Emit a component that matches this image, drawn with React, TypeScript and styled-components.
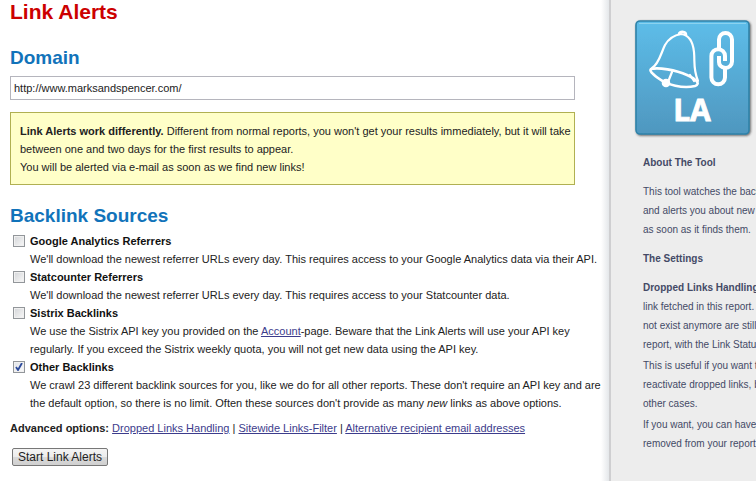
import React, { useState } from "react";
import styled, { createGlobalStyle } from "styled-components";

const GlobalStyle = createGlobalStyle`
  *, *::before, *::after { box-sizing: border-box; }
  body {
    margin: 0;
    background: #fff;
    color: #222;
    font: 11px/18px "Liberation Sans", Arial, sans-serif;
  }
  h1, h2, h3, p { margin: 0; }
`;

const Page = styled.div`
  display: grid;
  grid-template-columns: minmax(0, 1fr) 147px;
  min-height: 100vh;
  overflow: hidden;
`;

const Main = styled.main`
  padding: 0 4px 12px 10px;
  background: linear-gradient(to left, #e4e7ea, #fff 8px);
`;

const Title = styled.h1`
  color: #c00;
  font-size: 21px;
  line-height: 24px;
`;

const SectionTitle = styled.h2`
  color: #1173ba;
  font-size: 19px;
  line-height: 22px;
`;

const DomainSection = styled.section`
  margin: 23px 30px 0 0;
`;

const DomainInput = styled.input`
  display: block;
  width: 100%;
  height: 24px;
  margin-top: 7px;
  padding: 0 3px;
  border: 1px solid #b5b5bd;
  border-radius: 0;
  background: #fff;
  color: #222;
  font: 11px "Liberation Sans", Arial, sans-serif;
`;

const Notice = styled.div`
  margin: 12px 30px 0 0;
  padding: 9px 1px 8px 9px;
  border: 1px solid #b0b052;
  background: #ffffc8;
`;

const Sources = styled.section`
  margin-top: 20px;
`;

const SourceList = styled.div`
  margin-top: 5px;
`;

const Source = styled.div`
  display: grid;
  grid-template-columns: 20px minmax(0, 1fr);
`;

const SourceLabel = styled.label`
  color: #111;
  font-weight: bold;
`;

const SourceText = styled.p`
  grid-column: 2;
`;

const Tick = styled.input`
  appearance: none;
  width: 12px;
  height: 12px;
  margin: 3px 0 0 3px;
  border: 1px solid #92969a;
  background: linear-gradient(135deg, #d3d5d8, #f8f8f8);
  box-shadow: inset 0 0 0 1px #f0f0f0;

  &:checked {
    background:
      url("data:image/svg+xml,%3Csvg xmlns='http://www.w3.org/2000/svg' viewBox='0 0 10 10'%3E%3Cpath d='M2 5l2 3 4-7' fill='none' stroke='%232d4b9b' stroke-width='1.8'/%3E%3C/svg%3E") center / 10px,
      linear-gradient(135deg, #dfe2e8, #fafafa);
  }
`;

const Link = styled.a`
  color: #3c3c8c;
  text-decoration: underline;
`;

const Advanced = styled.p`
  margin-top: 7px;
`;

const StartButton = styled.button`
  display: block;
  margin: 11px 0 0 2px;
  height: 18px;
  padding: 0 5px;
  border: 1px solid #777;
  border-radius: 2px;
  background: linear-gradient(#f4f4f4, #ececec 50%, #dadada 50%, #d0d0d0);
  color: #222;
  font: 12px/16px "Liberation Sans", Arial, sans-serif;
`;

const Sidebar = styled.aside`
  display: flex;
  flex-direction: column;
  align-items: flex-start;
  gap: 10px;
  overflow: hidden;
  padding: 17px 0 0 32px;
  border-left: 2px solid #cfcfd1;
  background: #ededed;
  color: #444a66;
  font-size: 10px;
  line-height: 19px;
  white-space: nowrap;
`;

const ToolLogo = styled.svg`
  display: block;
  flex: none;
  width: 122px;
  height: 124px;
  margin: 0 0 2px -10px;
`;

const SideHeading = styled.h3`
  font-size: 10px;
  line-height: 19px;
`;

const SideGroup = styled.div`
  display: flex;
  flex-direction: column;
  gap: 2px;
`;

const sources = [
  {
    id: "analytics",
    name: "Google Analytics Referrers",
    text: "We'll download the newest referrer URLs every day. This requires access to your Google Analytics data via their API.",
  },
  {
    id: "statcounter",
    name: "Statcounter Referrers",
    text: "We'll download the newest referrer URLs every day. This requires access to your Statcounter data.",
  },
  {
    id: "sistrix",
    name: "Sistrix Backlinks",
    text: (
      <>
        We use the Sistrix API key you provided on the <Link href="#account">Account</Link>-page. Beware that the Link
        Alerts will use your API key
        <br />
        regularly. If you exceed the Sistrix weekly quota, you will not get new data using the API key.
      </>
    ),
  },
  {
    id: "other",
    name: "Other Backlinks",
    text: (
      <>
        We crawl 23 different backlink sources for you, like we do for all other reports. These don't require an API key
        and are
        <br />
        the default option, so there is no limit. Often these sources don't provide as many <em>new</em> links as above
        options.
      </>
    ),
  },
];

function Logo() {
  return (
    <ToolLogo viewBox="0 0 122 124" role="img" aria-label="Link Alerts">
      <defs>
        <linearGradient id="tile" x1="0" y1="0" x2="0" y2="1">
          <stop offset="0" stopColor="#5dbde9" />
          <stop offset="1" stopColor="#4f97bf" />
        </linearGradient>
        <filter id="shade" x="-10%" y="-10%" width="120%" height="120%">
          <feDropShadow dx="1" dy="1" stdDeviation="1" floodColor="#333" floodOpacity="0.75" />
        </filter>
      </defs>
      <rect x="3" y="4" width="113" height="113" rx="4" fill="url(#tile)" stroke="#2f83a9" strokeWidth="1.6" filter="url(#shade)" />
      <path d="M6 6.500H113" stroke="#8bd2ef" strokeWidth="1" />
      <g fill="none" stroke="#fff" strokeLinecap="round" strokeLinejoin="round">
        <path d="M19 51C26 47 28 36 32 28C36 21 42 18 48 17C56 18 60 25 61 35C62 46 60 52 65 64" strokeWidth="2.200" />
        <path d="M46 17C46 14 53 14 53 18" strokeWidth="2.600" />
        <path d="M18 52C25 50 43 53 54 58C63 62 68 67 62 69C50 72 34 68 25 61C20 57 16 54 18 52Z" strokeWidth="2.600" />
        <path d="M39 55L35 65M57 58L61 64" strokeWidth="2.200" />
      </g>
      <circle cx="33" cy="66" r="4.300" fill="#fff" />
      <g fill="none" stroke="#fff" strokeWidth="4">
        <path d="M86 32V22.500A6.500 6.500 0 0 1 99 22.500V44.500A6.500 6.500 0 0 1 92.500 51Q86 50 86 45V39" />
        <path d="M92 50V60.500A6.800 6.800 0 0 1 78.400 60.500V39A6.800 6.800 0 0 1 92 39V44" />
      </g>
      <text x="59" y="104" textAnchor="middle" fill="#fff" stroke="#fff" strokeWidth="0.8" fontFamily="'Open Sans', sans-serif" fontSize="30" fontWeight="700">
        LA
      </text>
    </ToolLogo>
  );
}

export default function App() {
  const [domain, setDomain] = useState("http://www.marksandspencer.com/");

  return (
    <>
      <GlobalStyle />
      <Page>
        <Main>
          <Title>Link Alerts</Title>
          <DomainSection>
            <SectionTitle>
              <label htmlFor="domain">Domain</label>
            </SectionTitle>
            <DomainInput id="domain" type="text" value={domain} onChange={(e) => setDomain(e.target.value)} />
          </DomainSection>
          <Notice>
            <p>
              <b>Link Alerts work differently.</b> Different from normal reports, you won't get your results
              immediately, but it will take
              <br />
              between one and two days for the first results to appear.
            </p>
            <p>You will be alerted via e-mail as soon as we find new links!</p>
          </Notice>
          <Sources>
            <SectionTitle>Backlink Sources</SectionTitle>
            <SourceList>
              {sources.map((source) => (
                <Source key={source.id}>
                  <Tick type="checkbox" id={source.id} defaultChecked={source.id === "other"} />
                  <SourceLabel htmlFor={source.id}>{source.name}</SourceLabel>
                  <SourceText>{source.text}</SourceText>
                </Source>
              ))}
            </SourceList>
          </Sources>
          <Advanced>
            <b>Advanced options:</b> <Link href="#dropped">Dropped Links Handling</Link> |{" "}
            <Link href="#sitewide">Sitewide Links-Filter</Link> |{" "}
            <Link href="#recipients">Alternative recipient email addresses</Link>
          </Advanced>
          <StartButton type="button">Start Link Alerts</StartButton>
        </Main>
        <Sidebar>
          <Logo />
          <SideHeading>About The Tool</SideHeading>
          <p>
            This tool watches the backl
            <br />
            and alerts you about new
            <br />
            as soon as it finds them.
          </p>
          <SideHeading>The Settings</SideHeading>
          <SideGroup>
            <p>
              <b>Dropped Links Handling</b>
              <br />
              link fetched in this report. L
              <br />
              not exist anymore are still a
              <br />
              report, with the Link Status
            </p>
            <p>
              This is useful if you want t
              <br />
              reactivate dropped links, b
              <br />
              other cases.
            </p>
            <p>
              If you want, you can have
              <br />
              removed from your report
            </p>
          </SideGroup>
        </Sidebar>
      </Page>
    </>
  );
}
